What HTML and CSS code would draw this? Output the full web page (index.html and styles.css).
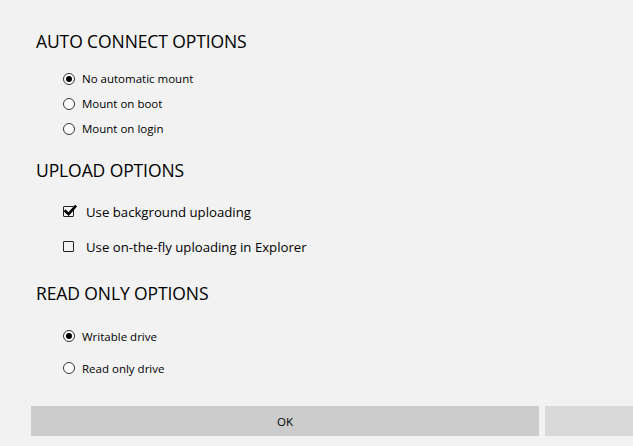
FILE: index.html
```html
<!DOCTYPE html>
<html lang="en">
<head>
    <meta charset="UTF-8">
    <meta name="viewport" content="width=device-width, initial-scale=1.0">
    <title>Drive options</title>
    <link rel="stylesheet" href="styles.css">
</head>
<body>
    <div class="panel">
        <section class="group">
            <h2 class="heading">AUTO CONNECT OPTIONS</h2>
            <div class="options options-auto">
                <label class="opt"><span class="radio checked"></span>No automatic mount</label>
                <label class="opt"><span class="radio"></span>Mount on boot</label>
                <label class="opt"><span class="radio"></span>Mount on login</label>
            </div>
        </section>

        <section class="group">
            <h2 class="heading">UPLOAD OPTIONS</h2>
            <div class="options options-upload">
                <label class="opt opt-check">
                    <span class="check checked">
                        <svg width="16" height="16" viewBox="0 0 16 16"><path d="M3.5 8.2 L6.6 11.2 L13.2 3.6" fill="none" stroke="#000" stroke-width="2.6" stroke-linecap="square"/></svg>
                    </span>Use background uploading
                </label>
                <label class="opt opt-check"><span class="check"></span>Use on-the-fly uploading in Explorer</label>
            </div>
        </section>

        <section class="group">
            <h2 class="heading">READ ONLY OPTIONS</h2>
            <div class="options options-readonly">
                <label class="opt"><span class="radio checked"></span>Writable drive</label>
                <label class="opt"><span class="radio"></span>Read only drive</label>
            </div>
        </section>
    </div>

    <div class="actions">
        <button class="btn btn-ok">OK</button>
        <button class="btn btn-cancel"></button>
    </div>
</body>
</html>
```

FILE: styles.css
```css
html, body {
    margin: 0;
    padding: 0;
    background-color: #f2f2f2;
    font-family: 'Open Sans', 'Noto Sans', sans-serif;
    color: #000;
    overflow: hidden;
}
.panel {
    padding: 29px 0 0 36px;
}
.group + .group {
    margin-top: 17px;
}
.heading {
    margin: 0;
    height: 24px;
    line-height: 24px;
    font-size: 17.5px;
    font-weight: 400;
    letter-spacing: -0.1px;
}
.options {
    display: flex;
    flex-direction: column;
    padding-left: 27px;
    margin-top: 13px;
}
.opt {
    display: flex;
    align-items: center;
    height: 25px;
    font-size: 11.5px;
}
.options-upload {
    margin-top: 12px;
}
.options-upload .opt {
    height: 35px;
    font-size: 13.2px;
}
.options-readonly {
    margin-top: 15px;
}
.options-readonly .opt {
    height: 32px;
}
.radio {
    width: 10px;
    height: 10px;
    border: 1px solid #333;
    border-radius: 50%;
    background: #fff;
    margin-right: 7px;
    display: flex;
    align-items: center;
    justify-content: center;
    flex: none;
}
.radio.checked::after {
    content: "";
    width: 6px;
    height: 6px;
    border-radius: 50%;
    background: #000;
}
.check {
    position: relative;
    width: 9px;
    height: 9px;
    border: 1.5px solid #222;
    border-radius: 1px;
    margin-right: 12px;
    flex: none;
}
.check svg {
    position: absolute;
    left: -2px;
    top: -4px;
}
.actions {
    display: flex;
    gap: 6px;
    padding-left: 31px;
    margin-top: 22px;
}
.btn {
    height: 30px;
    border: none;
    font-family: 'Open Sans', 'Noto Sans', sans-serif;
    font-size: 11.5px;
    color: #000;
    padding: 0;
}
.btn-ok {
    flex: none;
    width: 508px;
    background-color: #cccccc;
}
.btn-cancel {
    flex: 1;
    background-color: #d9d9d9;
}
```
